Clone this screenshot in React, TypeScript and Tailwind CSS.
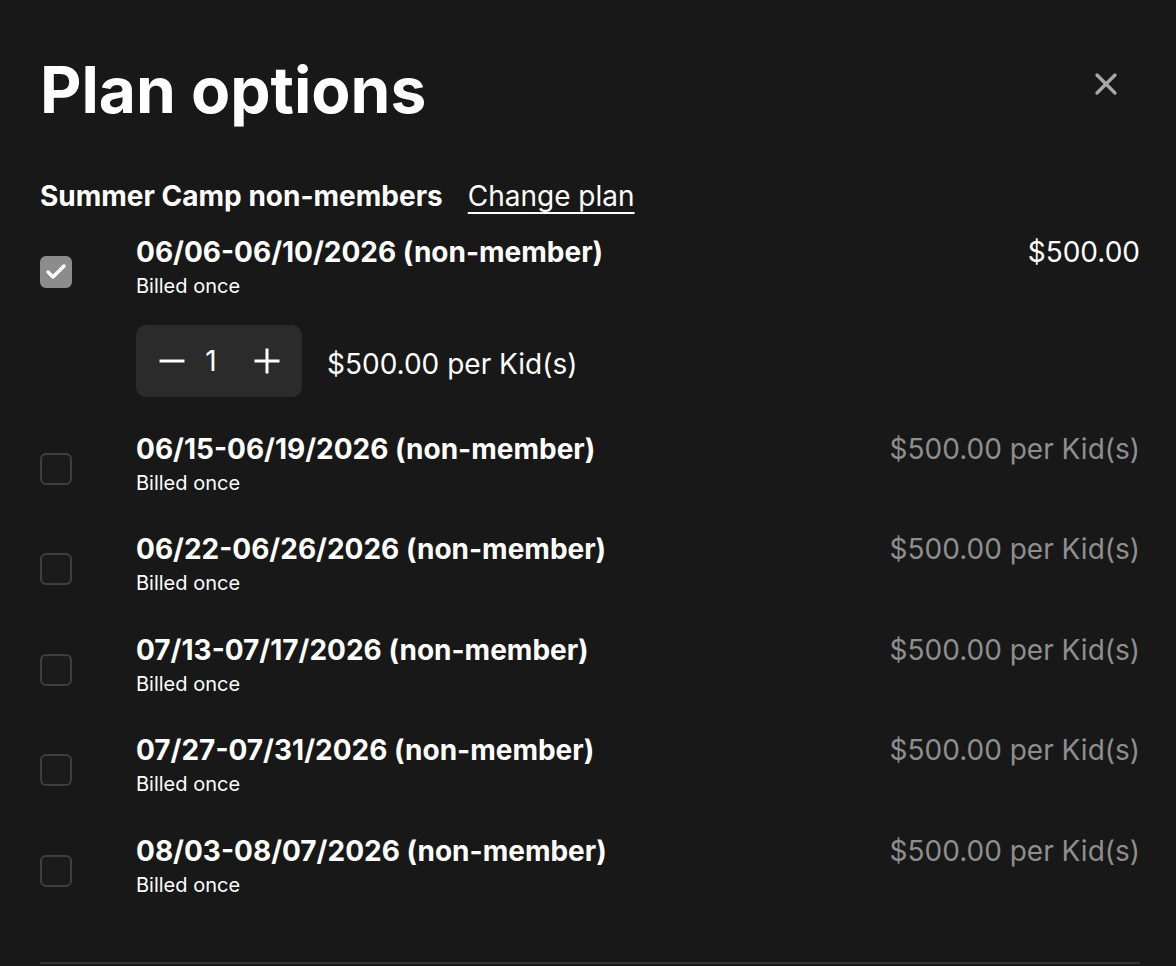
import { X, Check } from 'lucide-react';

interface Plan {
  dates: string;
  selected?: boolean;
}

const plans: Plan[] = [
  { dates: '06/06-06/10/2026 (non-member)', selected: true },
  { dates: '06/15-06/19/2026 (non-member)' },
  { dates: '06/22-06/26/2026 (non-member)' },
  { dates: '07/13-07/17/2026 (non-member)' },
  { dates: '07/27-07/31/2026 (non-member)' },
  { dates: '08/03-08/07/2026 (non-member)' },
];

function PlanRow({ plan }: { plan: Plan }) {
  return (
    <div className="flex items-start">
      {/* Checkbox */}
      <div className="w-[96px] shrink-0 pt-[23px]">
        {plan.selected ? (
          <div className="w-8 h-8 rounded-[6px] bg-[#8c8c8c] flex items-center justify-center">
            <Check className="w-6 h-6 text-white" strokeWidth={3.5} />
          </div>
        ) : (
          <div className="w-8 h-8 rounded-[6px] border-2 border-[#3f3f3f] bg-[#1b1b1b]" />
        )}
      </div>

      {/* Content */}
      <div className="flex-1">
        <div className="flex items-start justify-between">
          <div>
            <div className="text-[28px] leading-[38px] font-bold text-white">{plan.dates}</div>
            <div className="text-[20px] leading-[30px] text-white">Billed once</div>
          </div>
          {plan.selected ? (
            <div className="text-[28px] leading-[38px] text-white">$500.00</div>
          ) : (
            <div className="text-[28px] leading-[38px] text-[#8e8e8e]">$500.00 per Kid(s)</div>
          )}
        </div>

        {plan.selected && (
          <div className="flex items-center gap-[25px] mt-[24px]">
            <div className="w-[166px] h-[72px] rounded-[10px] bg-[#2b2b2b] flex items-center pl-[23px] text-white">
              <svg width="26" height="26" viewBox="0 0 26 26" fill="none" stroke="currentColor" strokeWidth="3">
                <path d="M0.5 13h25" />
              </svg>
              <span className="ml-[19px] w-[14px] text-center text-[28px] leading-none">1</span>
              <svg className="ml-[36px]" width="26" height="26" viewBox="0 0 26 26" fill="none" stroke="currentColor" strokeWidth="3">
                <path d="M0.5 13h25M13 0.5v25" />
              </svg>
            </div>
            <span className="text-[28px] text-white pt-[6px]">$500.00 per Kid(s)</span>
          </div>
        )}
      </div>
    </div>
  );
}

export default function App() {
  return (
    <div
      className="min-h-screen bg-[#181818] pl-10 pr-[36px] pt-[54px]"
      style={{ fontFamily: 'Inter, "Noto Sans", sans-serif' }}
    >
      {/* Header */}
      <div className="flex items-center justify-between">
        <h1 className="text-[64px] leading-[72px] font-bold text-white">Plan options</h1>
        <button className="mr-[16px] -mt-[12px] text-[#a8a8a8]">
          <X className="w-9 h-9" strokeWidth={2.2} />
        </button>
      </div>

      <div className="flex items-center gap-[25px] mt-[52px]">
        <span className="text-[28px] leading-[36px] font-bold text-white">Summer Camp non-members</span>
        <span className="text-[28px] leading-[36px] text-white underline underline-offset-[6px] decoration-[1.5px]">
          Change plan
        </span>
      </div>

      {/* Plans */}
      <div className="flex flex-col gap-[32.5px] mt-[19px]">
        {plans.map((p) => (
          <PlanRow key={p.dates} plan={p} />
        ))}
      </div>

      <div className="mt-[62px] h-[2px] bg-[#333333]" />
    </div>
  );
}
